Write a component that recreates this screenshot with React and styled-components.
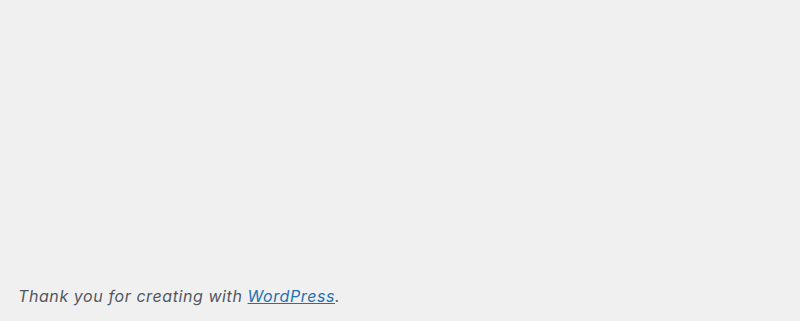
import React from "react";
import styled, { createGlobalStyle } from "styled-components";

const Global = createGlobalStyle`
  html, body { margin: 0; padding: 0; background: #f0f0f1; }
  body { font-family: Inter, "Noto Sans", sans-serif; }
`;

const Page = styled.div`
  min-height: 321px;
  display: flex;
  flex-direction: column;
  justify-content: flex-end;
  background: #f0f0f1;
`;

const Footer = styled.footer`
  padding: 0 20px 15px 18px;
`;

const Text = styled.p`
  margin: 0;
  font-size: 16px;
  line-height: 20px;
  letter-spacing: 0.58px;
  font-style: italic;
  color: #50575e;
`;

const Link = styled.a`
  color: #2271b1;
  text-decoration: underline;
`;

export default function App() {
  return (
    <>
      <Global />
      <Page>
        <Footer>
          <Text>
            Thank you for creating with <Link href="#">WordPress</Link>.
          </Text>
        </Footer>
      </Page>
    </>
  );
}
